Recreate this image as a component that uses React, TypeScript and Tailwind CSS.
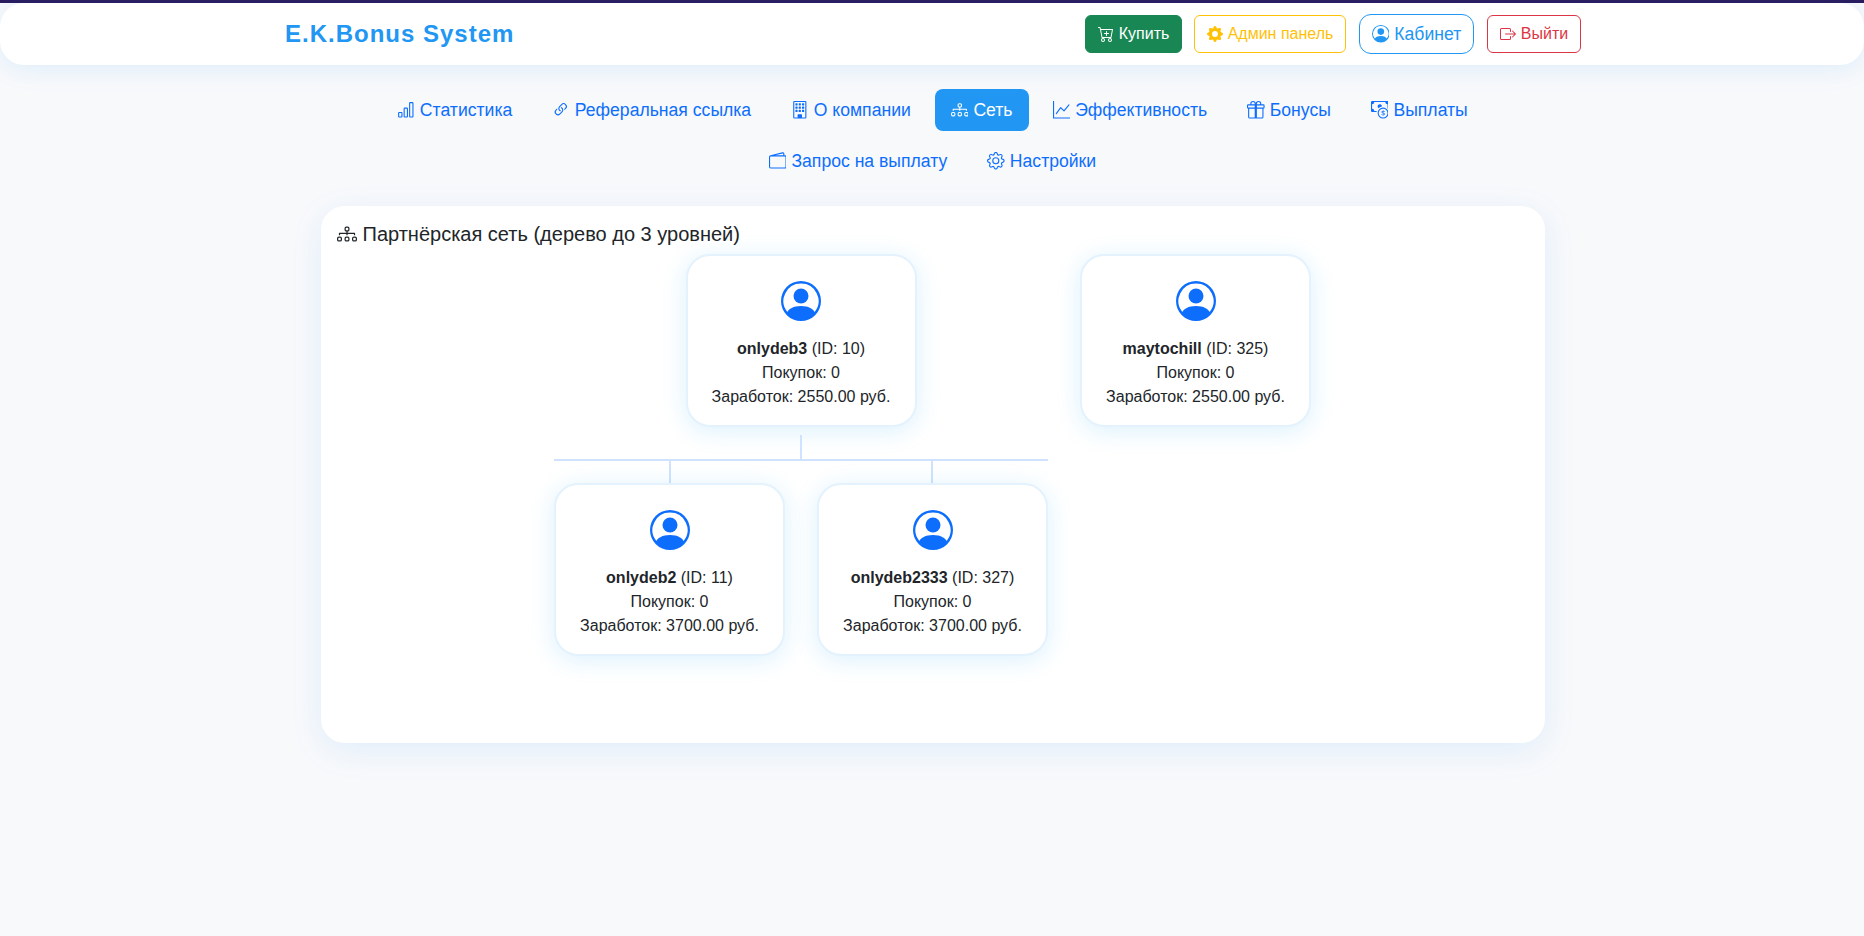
import React from "react";
import {
  BsBarChart, BsLink45Deg, BsBuilding, BsDiagram3, BsGraphUp, BsGift, BsCashCoin, BsWallet2, BsGear,
  BsCartPlus, BsGearFill, BsPersonCircle, BsBoxArrowRight,
} from "react-icons/bs";

const row1 = [
  { icon: BsBarChart, label: "Статистика" },
  { icon: BsLink45Deg, label: "Реферальная ссылка" },
  { icon: BsBuilding, label: "О компании" },
  { icon: BsDiagram3, label: "Сеть", active: true },
  { icon: BsGraphUp, label: "Эффективность" },
  { icon: BsGift, label: "Бонусы" },
  { icon: BsCashCoin, label: "Выплаты" },
];
const row2 = [
  { icon: BsWallet2, label: "Запрос на выплату" },
  { icon: BsGear, label: "Настройки" },
];

function NavItem({ item }: { item: { icon: any; label: string; active?: boolean } }) {
  const Icon = item.icon;
  return (
    <a
      className={
        "m-1 flex items-center gap-[5px] rounded-lg px-4 py-2 text-[17.6px] leading-[26.4px] " +
        (item.active ? "bg-[#2196f3] text-white" : "text-[#0d6efd]")
      }
    >
      <Icon className="h-[17.6px] w-[17.6px]" />
      <span>{item.label}</span>
    </a>
  );
}

function Node({ name, id, buys, earn }: { name: string; id: number; buys: number; earn: string }) {
  return (
    <div className="flex w-[231px] flex-col items-center rounded-[24px] border-2 border-[#e3f2fd] bg-white pb-4 pt-[25px] text-center text-[16px] leading-6 text-[#212529] shadow-[0_4px_24px_rgba(33,170,243,0.16)]">
      <BsPersonCircle className="mb-4 h-10 w-10 text-[#0d6efd]" />
      <div>
        <b>{name}</b> (ID: {id})
      </div>
      <div>Покупок: {buys}</div>
      <div>Заработок: {earn} руб.</div>
    </div>
  );
}

export default function App() {
  return (
    <div className="min-h-[936px] bg-[#f8f9fb] font-['Liberation_Sans',Arial,sans-serif]">
      <div className="h-[3px] bg-[#2a1b5e]" />
      <header className="h-[62px] rounded-3xl bg-white pl-[2px] shadow-[0_4px_24px_rgba(33,150,243,0.12)]">
        <div className="mx-auto flex h-full w-[1320px] items-center justify-between px-3">
          <div className="text-[24px] font-bold tracking-[1px] text-[#2196f3]">E.K.Bonus System</div>
          <div className="flex items-center">
            <a className="flex h-[38px] w-[97px] items-center justify-center gap-[5px] rounded-md border border-[#198754] bg-[#198754] text-[16px] text-white">
              <BsCartPlus className="h-4 w-4" />
              Купить
            </a>
            <a className="ml-3 flex h-[38px] w-[152px] items-center justify-center gap-[5px] rounded-md border border-[#ffc107] text-[16px] text-[#ffc107]">
              <BsGearFill className="h-4 w-4" />
              Админ панель
            </a>
            <a className="ml-[13px] flex h-10 w-[115px] items-center justify-center gap-[5px] rounded-xl border border-[#2196f3] text-[17.6px] text-[#2196f3]">
              <BsPersonCircle className="h-[17.6px] w-[17.6px]" />
              Кабинет
            </a>
            <a className="ml-[13px] flex h-[38px] w-[94px] items-center justify-center gap-[5px] rounded-md border border-[#dc3545] text-[16px] text-[#dc3545]">
              <BsBoxArrowRight className="h-4 w-4" />
              Выйти
            </a>
          </div>
        </div>
      </header>

      <nav className="my-5 pl-px">
        <div className="flex justify-center">
          {row1.map((it) => (
            <NavItem key={it.label} item={it} />
          ))}
        </div>
        <div className="mt-[0.6px] flex justify-center">
          {row2.map((it) => (
            <NavItem key={it.label} item={it} />
          ))}
        </div>
      </nav>

      <div className="pl-[2px]">
        <main className="mx-auto h-[537px] w-[1224px] rounded-3xl bg-white p-4 text-[#212529] shadow-[0_8px_32px_rgba(33,150,243,0.11)]">
          <h5 className="mb-[7.4px] flex items-center gap-[5.5px] text-[20px] leading-6">
            <BsDiagram3 className="h-5 w-5" />
            Партнёрская сеть (дерево до 3 уровней)
          </h5>
          <div className="mr-px flex justify-center gap-8">
            <div className="flex w-[494px] flex-col items-center">
              <Node name="onlydeb3" id={10} buys={0} earn="2550.00" />
              <div className="mt-2 h-6 w-0.5 bg-[#cfe2ff]" />
              <div className="h-0.5 w-full bg-[#cfe2ff]" />
              <div className="flex w-full justify-between">
                <div className="flex flex-col items-center">
                  <div className="h-[22px] w-0.5 bg-[#cfe2ff]" />
                  <Node name="onlydeb2" id={11} buys={0} earn="3700.00" />
                </div>
                <div className="flex flex-col items-center">
                  <div className="mr-px h-[22px] w-0.5 bg-[#cfe2ff]" />
                  <Node name="onlydeb2333" id={327} buys={0} earn="3700.00" />
                </div>
              </div>
            </div>
            <div>
              <Node name="maytochill" id={325} buys={0} earn="2550.00" />
            </div>
          </div>
        </main>
      </div>
    </div>
  );
}
